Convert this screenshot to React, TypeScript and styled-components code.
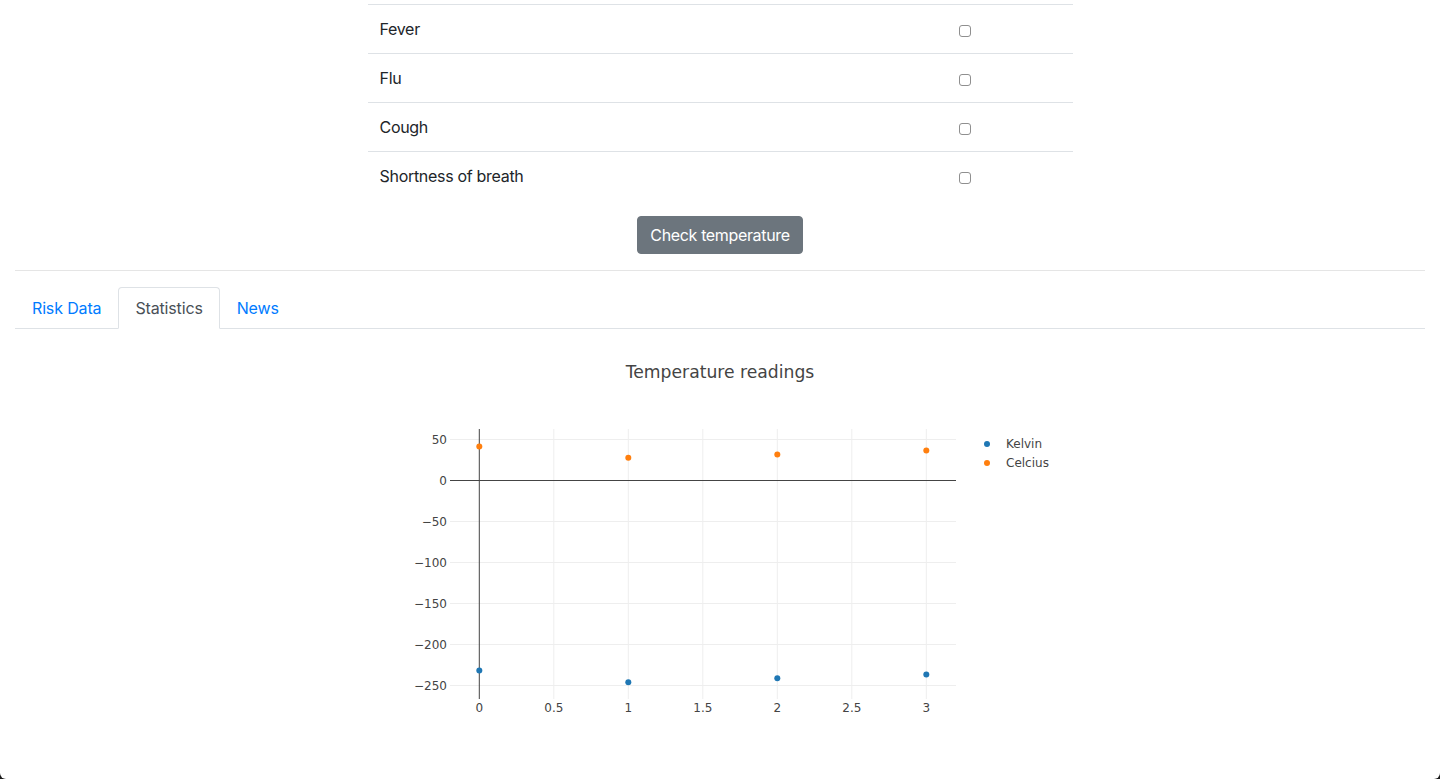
import React from "react";
import styled, { createGlobalStyle } from "styled-components";

const GlobalStyle = createGlobalStyle`
  html, body { margin: 0; padding: 0; background: #1b1b1b; }
  body {
    font-family: "Inter", "Roboto", "Liberation Sans", sans-serif;
    font-size: 16px;
    line-height: 1.5;
    letter-spacing: -0.3px;
    color: #212529;
  }
  * { box-sizing: border-box; }
`;

const Window = styled.div`
  background: #fff;
  height: 779px;
  overflow: hidden;
  border-radius: 0 0 6px 6px;
  padding-top: 4px;
`;

const Container = styled.div`
  padding: 0 15px;
`;

const SymptomTable = styled.div`
  width: 705px;
  margin: 0 auto 16px;
`;

const Row = styled.div`
  display: grid;
  grid-template-columns: 579px 1fr;
  border-top: 1px solid #dee2e6;
`;

const Cell = styled.div`
  padding: 12px;
  line-height: 24px;
  display: flex;
  align-items: center;
`;

const Check = styled.input`
  appearance: none;
  -webkit-appearance: none;
  width: 12px;
  height: 12px;
  margin: 4px 0 0 0;
  border: 1px solid #8f8f8f;
  border-radius: 3px;
  background: #fff;
`;

const Center = styled.div`
  display: flex;
  justify-content: center;
`;

const Button = styled.button`
  font-family: inherit;
  font-size: 16px;
  letter-spacing: -0.35px;
  line-height: 24px;
  padding: 6px 12px;
  color: #fff;
  background: #6c757d;
  border: 1px solid #6c757d;
  border-radius: 4px;
`;

const Rule = styled.hr`
  margin: 16px 0;
  border: 0;
  border-top: 1px solid rgba(0, 0, 0, 0.1);
`;

const Tabs = styled.ul`
  display: flex;
  list-style: none;
  margin: 0;
  padding: 0;
  border-bottom: 1px solid #dee2e6;
`;

const Tab = styled.li<{ $active?: boolean }>`
  margin-bottom: -1px;
  padding: 8px 16px;
  line-height: 24px;
  letter-spacing: -0.15px;
  border: 1px solid transparent;
  border-color: ${(p) => (p.$active ? "#dee2e6 #dee2e6 #fff" : "transparent")};
  border-radius: 4px 4px 0 0;
  background: ${(p) => (p.$active ? "#fff" : "transparent")};
  color: ${(p) => (p.$active ? "#495057" : "#007bff")};
`;

const ChartWrap = styled.div`
  display: flex;
  justify-content: center;
`;

const symptoms = ["Fever", "Flu", "Cough", "Shortness of breath"];

const kelvin = [-231.65, -245.9, -241.3, -236.55];
const celcius = [41.5, 27.6, 31.8, 36.6];

const X = (u: number) => 109.3 + 149 * u;
const Y = (v: number) => 151.5 - 0.82 * v;

const Chart: React.FC = () => {
  const yTicks = [50, 0, -50, -100, -150, -200, -250];
  const xTicks = [0, 0.5, 1, 1.5, 2, 2.5, 3];
  const font = "'DejaVu Sans', Verdana, sans-serif";
  return (
    <svg width={700} height={450} viewBox="0 0 700 450" style={{ letterSpacing: 0 }}>
      <text x={350} y={49} textAnchor="middle" fontFamily={font} fontSize={17.2} fill="#444">
        Temperature readings
      </text>
      {xTicks.map((t) =>
        t === 0 ? null : (
          <line key={"gx" + t} x1={X(t)} x2={X(t)} y1={100} y2={370} stroke="#eee" strokeWidth={1} />
        )
      )}
      {yTicks.map((t) =>
        t === 0 ? null : (
          <line key={"gy" + t} x1={80} x2={586} y1={Y(t)} y2={Y(t)} stroke="#eee" strokeWidth={1} />
        )
      )}
      <line x1={80} x2={586} y1={Y(0)} y2={Y(0)} stroke="#444" strokeWidth={1} />
      <line x1={X(0)} x2={X(0)} y1={100} y2={370} stroke="#444" strokeWidth={1} />
      {yTicks.map((t) => (
        <text key={"ly" + t} x={77} y={Y(t) + 4} textAnchor="end" fontFamily={font} fontSize={12} fill="#444">
          {t < 0 ? "\u2212" + Math.abs(t) : t}
        </text>
      ))}
      {xTicks.map((t) => (
        <text key={"lx" + t} x={X(t)} y={383} textAnchor="middle" fontFamily={font} fontSize={12} fill="#444">
          {t}
        </text>
      ))}
      {kelvin.map((v, i) => (
        <circle key={"k" + i} cx={X(i)} cy={Y(v)} r={3} fill="#1f77b4" />
      ))}
      {celcius.map((v, i) => (
        <circle key={"c" + i} cx={X(i)} cy={Y(v)} r={3} fill="#ff7f0e" />
      ))}
      <circle cx={617} cy={115} r={3} fill="#1f77b4" />
      <text x={636} y={119} fontFamily={font} fontSize={12} fill="#444">Kelvin</text>
      <circle cx={617} cy={134} r={3} fill="#ff7f0e" />
      <text x={636} y={138} fontFamily={font} fontSize={12} fill="#444">Celcius</text>
    </svg>
  );
};

export default function App() {
  return (
    <>
      <GlobalStyle />
      <Window>
        <Container>
          <SymptomTable>
            {symptoms.map((s) => (
              <Row key={s}>
                <Cell>{s}</Cell>
                <Cell>
                  <Check type="checkbox" />
                </Cell>
              </Row>
            ))}
          </SymptomTable>
          <Center>
            <Button>Check temperature</Button>
          </Center>
          <Rule />
          <Tabs>
            <Tab>Risk Data</Tab>
            <Tab $active>Statistics</Tab>
            <Tab>News</Tab>
          </Tabs>
          <ChartWrap>
            <Chart />
          </ChartWrap>
        </Container>
      </Window>
    </>
  );
}
